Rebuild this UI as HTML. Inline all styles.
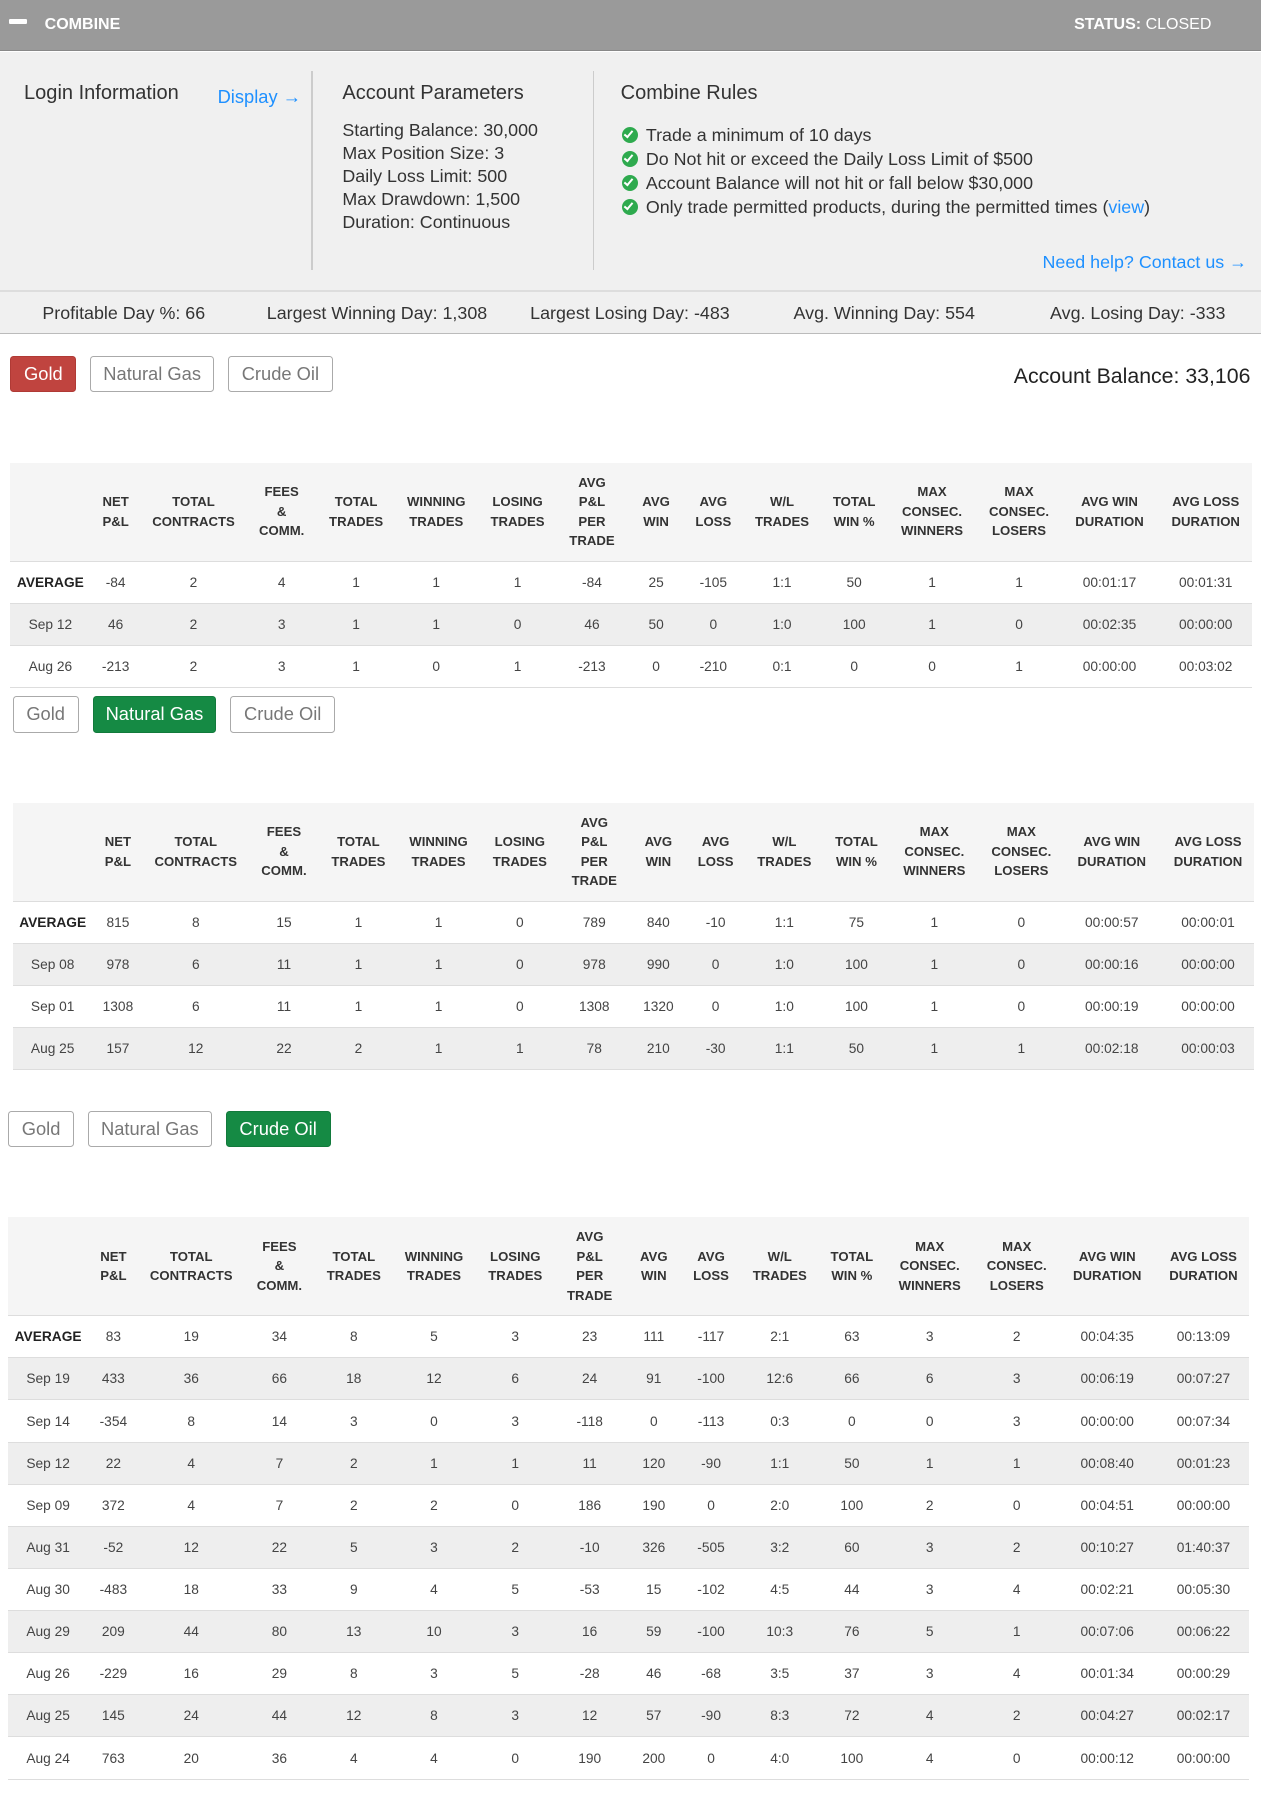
<!DOCTYPE html>
<html><head><meta charset="utf-8">
<style>
html,body{margin:0;padding:0;background:#fff;overflow:hidden}
#w{zoom:1.1451;width:1103px;position:relative;height:1567px;font-family:"Liberation Sans",Arial,sans-serif;color:#333}
.hdr{position:absolute;left:0;top:0;width:1101px;height:44px;background:#9a9a9a;border-bottom:1px solid #888;color:#fff;font-weight:bold;font-size:14px}
.hdr .mi{position:absolute;left:8px;top:17px;width:16px;height:4px;background:#fff;border-radius:1px}
.hdr .t{position:absolute;left:39px;top:13px}
.hdr .s{position:absolute;left:938px;top:13px}
.hdr .s span{font-weight:normal}
.info{position:absolute;left:0;top:45px;width:1101px;height:208px;background:#f0f0f0;border-bottom:2px solid #ddd}
.a{position:absolute;white-space:nowrap}
.h3{font-size:17.5px;color:#333}
.blue{color:#1e90ff}
.vd{position:absolute;width:1px;background:#ccc;top:17px;height:174px}
.lst{font-size:15.6px;line-height:20px}
.rules{font-size:15.6px;line-height:21px}
.chk{display:inline-block;width:14px;height:14px;border-radius:50%;background:#2eaa4e;vertical-align:-2px;margin-right:7px;position:relative}
.chk:after{content:"";position:absolute;left:4px;top:2px;width:3px;height:6px;border:solid #fff;border-width:0 2px 2px 0;transform:rotate(40deg)}
.stats{position:absolute;left:0;top:255px;width:1101px;height:36px;background:#f0f0f0;border-bottom:1px solid #bbb;font-size:15.6px}
.stats span{position:absolute;top:10px;white-space:nowrap}
.btn{position:absolute;height:30px;border:1px solid #aaa;border-radius:3px;font-size:16px;line-height:30px;text-align:center;color:#777;background:#fff;box-sizing:content-box}
.red{background:#c0443f;border-color:#b03a35;color:#fff}
.grn{background:#158a44;border-color:#127a3c;color:#fff}
table{position:absolute;border-collapse:collapse;table-layout:fixed;width:1084px}
th{background:#f5f5f5;font-size:11.5px;font-weight:bold;line-height:17px;text-align:center;vertical-align:middle;border-bottom:1px solid #ddd;padding:0}
thead tr{height:86px}
td{font-size:12px;text-align:center;height:36.8px;border-bottom:1px solid #ddd;padding:0;color:#444;box-sizing:border-box}
tbody tr:nth-child(even) td{background:#eee}
td.f{font-weight:bold;color:#222}
</style></head><body><div id="w">
<div class="hdr"><div class="mi"></div><div class="t">COMBINE</div><div class="s">STATUS: <span>CLOSED</span></div></div>
<div class="info">
<div class="a h3" style="left:21px;top:27px">Login Information</div>
<div class="a blue" style="left:190px;top:30px;font-size:16px">Display →</div>
<div class="vd" style="left:272px"></div>
<div class="a h3" style="left:299px;top:27px">Account Parameters</div>
<div class="a lst" style="left:299px;top:59px">Starting Balance: 30,000<br>Max Position Size: 3<br>Daily Loss Limit: 500<br>Max Drawdown: 1,500<br>Duration: Continuous</div>
<div class="vd" style="left:518px"></div>
<div class="a h3" style="left:542px;top:27px">Combine Rules</div>
<div class="a rules" style="left:543px;top:62px"><span class="chk"></span>Trade a minimum of 10 days<br><span class="chk"></span>Do Not hit or exceed the Daily Loss Limit of $500<br><span class="chk"></span>Account Balance will not hit or fall below $30,000<br><span class="chk"></span>Only trade permitted products, during the permitted times (<span class="blue">view</span>)</div>
<div class="a blue" style="right:12px;top:175px;font-size:15.6px">Need help? Contact us →</div>
</div>
<div class="stats"><span style="left:37px">Profitable Day %: 66</span><span style="left:233px">Largest Winning Day: 1,308</span><span style="left:463px">Largest Losing Day: -483</span><span style="left:693px">Avg. Winning Day: 554</span><span style="left:917px">Avg. Losing Day: -333</span></div>

<div class="btn red" style="left:9px;top:311px;width:56px">Gold</div>
<div class="btn" style="left:79px;top:311px;width:106px">Natural Gas</div>
<div class="btn" style="left:199px;top:311px;width:90px">Crude Oil</div>
<div class="a" style="right:11px;top:318px;font-size:18.6px;color:#222">Account Balance: 33,106</div>

<table style="left:9px;top:404px">
<colgroup><col style="width:70px"><col style="width:44px"><col style="width:92px"><col style="width:62px"><col style="width:68px"><col style="width:72px"><col style="width:70px"><col style="width:60px"><col style="width:52px"><col style="width:48px"><col style="width:72px"><col style="width:54px"><col style="width:82px"><col style="width:70px"><col style="width:88px"><col style="width:80px"></colgroup>
<thead><tr><th></th><th>NET<br>P&amp;L</th><th>TOTAL<br>CONTRACTS</th><th>FEES<br>&amp;<br>COMM.</th><th>TOTAL<br>TRADES</th><th>WINNING<br>TRADES</th><th>LOSING<br>TRADES</th><th>AVG<br>P&amp;L<br>PER<br>TRADE</th><th>AVG<br>WIN</th><th>AVG<br>LOSS</th><th>W/L<br>TRADES</th><th>TOTAL<br>WIN %</th><th>MAX<br>CONSEC.<br>WINNERS</th><th>MAX<br>CONSEC.<br>LOSERS</th><th>AVG WIN<br>DURATION</th><th>AVG LOSS<br>DURATION</th></tr></thead>
<tbody>
<tr><td class="f">AVERAGE</td><td>-84</td><td>2</td><td>4</td><td>1</td><td>1</td><td>1</td><td>-84</td><td>25</td><td>-105</td><td>1:1</td><td>50</td><td>1</td><td>1</td><td>00:01:17</td><td>00:01:31</td></tr>
<tr><td>Sep 12</td><td>46</td><td>2</td><td>3</td><td>1</td><td>1</td><td>0</td><td>46</td><td>50</td><td>0</td><td>1:0</td><td>100</td><td>1</td><td>0</td><td>00:02:35</td><td>00:00:00</td></tr>
<tr><td>Aug 26</td><td>-213</td><td>2</td><td>3</td><td>1</td><td>0</td><td>1</td><td>-213</td><td>0</td><td>-210</td><td>0:1</td><td>0</td><td>0</td><td>1</td><td>00:00:00</td><td>00:03:02</td></tr>
</tbody></table>

<div class="btn" style="left:11px;top:608px;width:56px">Gold</div>
<div class="btn grn" style="left:81px;top:608px;width:106px">Natural Gas</div>
<div class="btn" style="left:201px;top:608px;width:90px">Crude Oil</div>

<table style="left:11px;top:701px">
<colgroup><col style="width:70px"><col style="width:44px"><col style="width:92px"><col style="width:62px"><col style="width:68px"><col style="width:72px"><col style="width:70px"><col style="width:60px"><col style="width:52px"><col style="width:48px"><col style="width:72px"><col style="width:54px"><col style="width:82px"><col style="width:70px"><col style="width:88px"><col style="width:80px"></colgroup>
<thead><tr><th></th><th>NET<br>P&amp;L</th><th>TOTAL<br>CONTRACTS</th><th>FEES<br>&amp;<br>COMM.</th><th>TOTAL<br>TRADES</th><th>WINNING<br>TRADES</th><th>LOSING<br>TRADES</th><th>AVG<br>P&amp;L<br>PER<br>TRADE</th><th>AVG<br>WIN</th><th>AVG<br>LOSS</th><th>W/L<br>TRADES</th><th>TOTAL<br>WIN %</th><th>MAX<br>CONSEC.<br>WINNERS</th><th>MAX<br>CONSEC.<br>LOSERS</th><th>AVG WIN<br>DURATION</th><th>AVG LOSS<br>DURATION</th></tr></thead>
<tbody>
<tr><td class="f">AVERAGE</td><td>815</td><td>8</td><td>15</td><td>1</td><td>1</td><td>0</td><td>789</td><td>840</td><td>-10</td><td>1:1</td><td>75</td><td>1</td><td>0</td><td>00:00:57</td><td>00:00:01</td></tr>
<tr><td>Sep 08</td><td>978</td><td>6</td><td>11</td><td>1</td><td>1</td><td>0</td><td>978</td><td>990</td><td>0</td><td>1:0</td><td>100</td><td>1</td><td>0</td><td>00:00:16</td><td>00:00:00</td></tr>
<tr><td>Sep 01</td><td>1308</td><td>6</td><td>11</td><td>1</td><td>1</td><td>0</td><td>1308</td><td>1320</td><td>0</td><td>1:0</td><td>100</td><td>1</td><td>0</td><td>00:00:19</td><td>00:00:00</td></tr>
<tr><td>Aug 25</td><td>157</td><td>12</td><td>22</td><td>2</td><td>1</td><td>1</td><td>78</td><td>210</td><td>-30</td><td>1:1</td><td>50</td><td>1</td><td>1</td><td>00:02:18</td><td>00:00:03</td></tr>
</tbody></table>

<div class="btn" style="left:7px;top:970px;width:56px">Gold</div>
<div class="btn" style="left:77px;top:970px;width:106px">Natural Gas</div>
<div class="btn grn" style="left:197px;top:970px;width:90px">Crude Oil</div>

<table style="left:7px;top:1063px">
<colgroup><col style="width:70px"><col style="width:44px"><col style="width:92px"><col style="width:62px"><col style="width:68px"><col style="width:72px"><col style="width:70px"><col style="width:60px"><col style="width:52px"><col style="width:48px"><col style="width:72px"><col style="width:54px"><col style="width:82px"><col style="width:70px"><col style="width:88px"><col style="width:80px"></colgroup>
<thead><tr><th></th><th>NET<br>P&amp;L</th><th>TOTAL<br>CONTRACTS</th><th>FEES<br>&amp;<br>COMM.</th><th>TOTAL<br>TRADES</th><th>WINNING<br>TRADES</th><th>LOSING<br>TRADES</th><th>AVG<br>P&amp;L<br>PER<br>TRADE</th><th>AVG<br>WIN</th><th>AVG<br>LOSS</th><th>W/L<br>TRADES</th><th>TOTAL<br>WIN %</th><th>MAX<br>CONSEC.<br>WINNERS</th><th>MAX<br>CONSEC.<br>LOSERS</th><th>AVG WIN<br>DURATION</th><th>AVG LOSS<br>DURATION</th></tr></thead>
<tbody>
<tr><td class="f">AVERAGE</td><td>83</td><td>19</td><td>34</td><td>8</td><td>5</td><td>3</td><td>23</td><td>111</td><td>-117</td><td>2:1</td><td>63</td><td>3</td><td>2</td><td>00:04:35</td><td>00:13:09</td></tr>
<tr><td>Sep 19</td><td>433</td><td>36</td><td>66</td><td>18</td><td>12</td><td>6</td><td>24</td><td>91</td><td>-100</td><td>12:6</td><td>66</td><td>6</td><td>3</td><td>00:06:19</td><td>00:07:27</td></tr>
<tr><td>Sep 14</td><td>-354</td><td>8</td><td>14</td><td>3</td><td>0</td><td>3</td><td>-118</td><td>0</td><td>-113</td><td>0:3</td><td>0</td><td>0</td><td>3</td><td>00:00:00</td><td>00:07:34</td></tr>
<tr><td>Sep 12</td><td>22</td><td>4</td><td>7</td><td>2</td><td>1</td><td>1</td><td>11</td><td>120</td><td>-90</td><td>1:1</td><td>50</td><td>1</td><td>1</td><td>00:08:40</td><td>00:01:23</td></tr>
<tr><td>Sep 09</td><td>372</td><td>4</td><td>7</td><td>2</td><td>2</td><td>0</td><td>186</td><td>190</td><td>0</td><td>2:0</td><td>100</td><td>2</td><td>0</td><td>00:04:51</td><td>00:00:00</td></tr>
<tr><td>Aug 31</td><td>-52</td><td>12</td><td>22</td><td>5</td><td>3</td><td>2</td><td>-10</td><td>326</td><td>-505</td><td>3:2</td><td>60</td><td>3</td><td>2</td><td>00:10:27</td><td>01:40:37</td></tr>
<tr><td>Aug 30</td><td>-483</td><td>18</td><td>33</td><td>9</td><td>4</td><td>5</td><td>-53</td><td>15</td><td>-102</td><td>4:5</td><td>44</td><td>3</td><td>4</td><td>00:02:21</td><td>00:05:30</td></tr>
<tr><td>Aug 29</td><td>209</td><td>44</td><td>80</td><td>13</td><td>10</td><td>3</td><td>16</td><td>59</td><td>-100</td><td>10:3</td><td>76</td><td>5</td><td>1</td><td>00:07:06</td><td>00:06:22</td></tr>
<tr><td>Aug 26</td><td>-229</td><td>16</td><td>29</td><td>8</td><td>3</td><td>5</td><td>-28</td><td>46</td><td>-68</td><td>3:5</td><td>37</td><td>3</td><td>4</td><td>00:01:34</td><td>00:00:29</td></tr>
<tr><td>Aug 25</td><td>145</td><td>24</td><td>44</td><td>12</td><td>8</td><td>3</td><td>12</td><td>57</td><td>-90</td><td>8:3</td><td>72</td><td>4</td><td>2</td><td>00:04:27</td><td>00:02:17</td></tr>
<tr><td>Aug 24</td><td>763</td><td>20</td><td>36</td><td>4</td><td>4</td><td>0</td><td>190</td><td>200</td><td>0</td><td>4:0</td><td>100</td><td>4</td><td>0</td><td>00:00:12</td><td>00:00:00</td></tr>
</tbody></table>
</div></body></html>
